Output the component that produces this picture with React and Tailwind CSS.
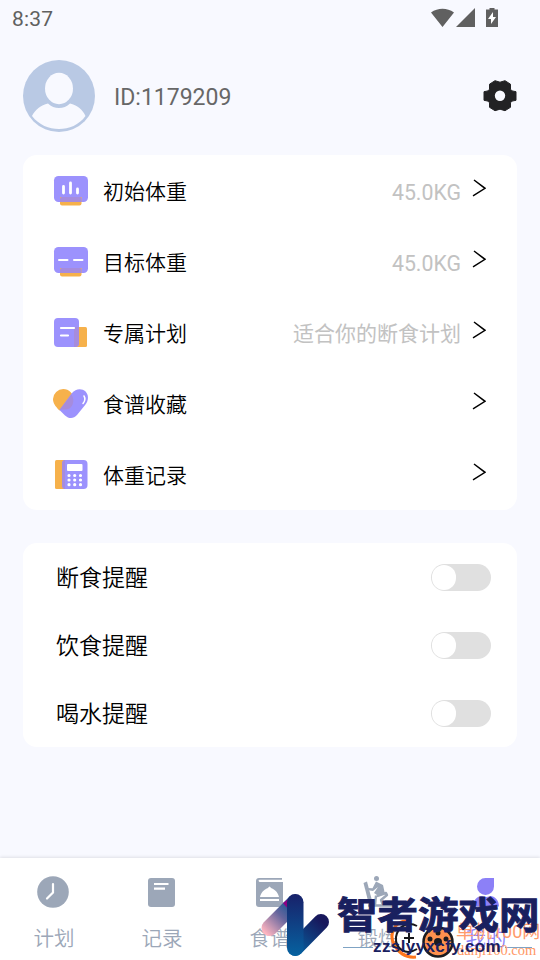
import React from "react";

const CJK = "font-['Roboto','Noto_Sans_CJK_SC',sans-serif]";

function Chevron() {
  return (
    <svg className="ml-[11px] mb-[5px] h-[18px] w-[14px] shrink-0" viewBox="0 0 14 18" fill="none" stroke="#000" strokeWidth="1.5">
      <path d="M2 1 13 9.3 1 16.8" />
    </svg>
  );
}

const icons = {
  bars: (
    <>
      <rect x="1" y="1" width="34" height="26" rx="4.5" fill="#9c92fd" />
      <path d="M7 22h21.500v6.500a2 2 0 0 1-2 2h-17.500a2 2 0 0 1-2-2z" fill="#f6b14b" />
      <path d="M7 24a2 2 0 0 1 2-2h17.500a2 2 0 0 1 2 2v3H7z" fill="#a68cdd" />
      <path d="M10.500 11.500v6.500M17.500 8v10M24.500 14v4" stroke="#fff" strokeWidth="2.800" strokeLinecap="round" />
    </>
  ),
  dashes: (
    <>
      <rect x="1" y="1" width="34" height="26" rx="4.500" fill="#9c92fd" />
      <path d="M7 22h21.500v6.500a2 2 0 0 1-2 2h-17.500a2 2 0 0 1-2-2z" fill="#f6b14b" />
      <path d="M7 24a2 2 0 0 1 2-2h17.500a2 2 0 0 1 2 2v3H7z" fill="#a68cdd" />
      <path d="M6 14h8.500M21 14h8.500" stroke="#fff" strokeWidth="2" strokeLinecap="round" />
    </>
  ),
  plan: (
    <>
      <rect x="21" y="10" width="13" height="20" rx="1.500" fill="#f6b14b" />
      <rect x="1" y="1" width="25" height="29" rx="4" fill="#9c92fd" />
      <path d="M21 12a2 2 0 0 1 2-2h3v16a4 4 0 0 1-4 4h-1z" fill="#a68cdd" />
      <path d="M8 11h13M8 18.500h7" stroke="#fff" strokeWidth="2.200" strokeLinecap="round" />
    </>
  ),
  heart: (
    <>
      <path d="M6.500 22.500C2 18 0 15 0 11A10.300 10.300 0 0 1 10.300 1C16 1 20.500 5.500 20.500 11z" fill="#f6b14b" />
      <path d="M6.500 22 19 5C22.500.5 29 0 32.500 3.500c3.500 3.500 3 9 0 13L24 27c-3.500 4-8 4-12 .5z" fill="#9c92fd" />
      <path d="M6.500 22 18.500 6.200c4 7 1 14.800-5.500 15.300-2.500 0-4.500-.2-6.500.5z" fill="#a68cdd" />
      <path d="M31 8c1.500 2.500 1 5-1 7.500" fill="none" stroke="#fff" strokeWidth="1.500" strokeLinecap="round" />
    </>
  ),
  calculator: (
    <>
      <rect x="2" y="1" width="16" height="29" rx="1.500" fill="#f6b14b" />
      <rect x="9" y="1" width="25.500" height="29" rx="4" fill="#9c92fd" />
      <path d="M9 5q0-4 3-4v29q-3 0-3-4z" fill="#a68cdd" />
      <rect x="14" y="5" width="15.500" height="7" rx="1" fill="#fff" />
      <path d="M16 16.500h.01M21.700 16.500h.01M27.500 16.500h.01M16 21h.01M21.700 21h.01M27.500 21h.01M16 25.700h.01M21.700 25.700h.01M27.500 25.700h.01" stroke="#fff" strokeWidth="3.200" strokeLinecap="round" />
    </>
  ),
};

const rows = [
  { icon: "bars", label: "初始体重", value: "45.0KG" },
  { icon: "dashes", label: "目标体重", value: "45.0KG" },
  { icon: "plan", label: "专属计划", value: "适合你的断食计划" },
  { icon: "heart", label: "食谱收藏", value: "" },
  { icon: "calculator", label: "体重记录", value: "" },
];

const reminders = ["断食提醒", "饮食提醒", "喝水提醒"];

const tabs = [
  {
    label: "计划",
    icon: (
      <>
        <circle cx="19" cy="20" r="15.800" fill="#9ca7b8" />
        <path d="M19 12v8.500l-6 6" fill="none" stroke="#fff" strokeWidth="2.200" strokeLinecap="round" />
      </>
    ),
  },
  {
    label: "记录",
    icon: (
      <>
        <rect x="6" y="6" width="27" height="29" rx="3" fill="#9ca7b8" />
        <path d="M12 12h14.500M12 16.700h11" stroke="#fff" strokeWidth="2.200" />
      </>
    ),
  },
  {
    label: "食谱",
    icon: (
      <>
        <path d="M6 9a3 3 0 0 1 3-3h23v1.800H9.500q-2 1 0 2.200H33v22a3 3 0 0 1-3 3H9a3 3 0 0 1-3-3z" fill="#9ca7b8" />
        <path d="M10 25c1-4 3-7 8-9q1.500-3 3 0c5 2 7 5 8 9zM10 27h19v2H10z" fill="#fff" />
      </>
    ),
  },
  {
    label: "锻炼",
    icon: (
      <>
        <circle cx="18.500" cy="6.500" r="2.500" fill="#9ca7b8" />
        <path d="m5.500 11 3.500-1.500 6 23h-4z" fill="#9ca7b8" />
        <path d="m18 9.500 7 3.500 2 9-8 1-3-2 4-6-5 4-6-1 .5-2 5 .3z" fill="#9ca7b8" />
        <path d="m19 24 9-3 1 2-6 5 2 5M17 33.500l1-10M10 33.500h24v-4h-7" fill="none" stroke="#9ca7b8" strokeWidth="2.400" strokeLinejoin="round" />
      </>
    ),
  },
  {
    label: "我的",
    icon: (
      <>
        <path d="M19.500 6H28v8.500A8.500 8.500 0 1 1 19.500 6z" fill="#8c80f7" />
        <path d="M7 34.500c0-6 4-10.500 9-10.500q4 2 8 0c5 0 9 4.500 9 10.500z" fill="#8c80f7" />
      </>
    ),
  },
];

function Watermark() {
  return (
    <div className="pointer-events-none absolute inset-0 overflow-hidden">
      <svg className="absolute left-0 top-0 h-full w-full" viewBox="0 0 540 110">
        <defs>
          <linearGradient id="arm" gradientUnits="userSpaceOnUse" x1="264" y1="82" x2="294" y2="52">
            <stop offset="0" stopColor="#ffb5c0" />
            <stop offset=".55" stopColor="#65659d" />
            <stop offset="1" stopColor="#065291" />
          </linearGradient>
          <linearGradient id="stem" x1="0" y1="0" x2="0" y2="1">
            <stop offset="0" stopColor="#18216a" />
            <stop offset="1" stopColor="#0662a0" />
          </linearGradient>
          <linearGradient id="tail" gradientUnits="userSpaceOnUse" x1="321" y1="71" x2="294" y2="102">
            <stop offset="0" stopColor="#18185c" />
            <stop offset="1" stopColor="#0662a0" />
          </linearGradient>
        </defs>
        <path d="M269.500 78 295 52.500" stroke="url(#arm)" strokeWidth="16" strokeLinecap="round" />
        <path d="m283 53 9-7-3 14z" fill="#8e0083" />
        <path d="M295.500 98 321 72" stroke="url(#tail)" strokeWidth="16" strokeLinecap="round" />
        <rect x="287" y="44" width="16.500" height="62" rx="8.200" fill="url(#stem)" />
        <path d="M343 97.500h30M505 97.500h27" stroke="#7fa3c4" strokeWidth="1" />
        <path d="M407 71c-13 0-18 14-13 23 5 10 12 14 22 13" fill="none" stroke="#ff761b" strokeWidth="3" />
        <path d="M417 76c-9-5-19 0-21 11-1 12 10 19 21 12M404 88h10M409 83v10" fill="none" stroke="#17171b" strokeWidth="2" />
        <circle cx="438" cy="92" r="14.500" fill="#ff914e" stroke="#1b1b20" strokeWidth="2.500" />
        <circle cx="438" cy="92" r="4" fill="#1b1b20" />
        <g fill="#1b1b20"><circle cx="430" cy="89" r="2.500" /><circle cx="446" cy="89" r="2.500" /><circle cx="438" cy="83" r="2.500" /></g>
      </svg>
      <span className="absolute left-[456px] top-[68px] whitespace-nowrap text-[18px] leading-[28px] text-[#ff9b6c]">单机100网</span>
      <span className="absolute left-[457px] top-[91px] whitespace-nowrap font-['Liberation_Serif','Noto_Sans_CJK_SC',serif] text-[14.500px] leading-[18px] text-[#ff9866]">danji100.com</span>
      <span className="absolute left-[337px] top-[41px] scale-y-[0.92] whitespace-nowrap font-['Noto_Sans_CJK_SC',sans-serif] text-[40.500px] font-bold leading-[44px] text-[#19205f] [-webkit-text-stroke:1px_#19205f]">智者游戏网</span>
      <span className="absolute left-[373px] top-[87px] whitespace-nowrap font-['Liberation_Sans','Noto_Sans_CJK_SC',sans-serif] text-[17px] font-bold leading-[20px] tracking-[0.4px] text-[#19205f]">zzslyyxcfy.com</span>
    </div>
  );
}

export default function App() {
  return (
    <div className={`flex h-[960px] w-[540px] flex-col overflow-hidden bg-[#f8f9ff] text-black ${CJK}`}>
      <div className="flex h-9 shrink-0 items-center justify-between pl-[12px] pr-[41px] pt-[2px] text-[21px] tracking-[0.2px] text-[#606060]">
        <span className="pt-[2px]">8:37</span>
        <svg className="mb-[2px] h-5 w-[68px]" viewBox="0 0 68 20" fill="#606060">
          <path d="M0 4.500C7-.5 16-.5 23 4.500L11.500 19zM44 0v19H25zM58.500 1.500V0h5v1.500h3.500V19h-12V1.500z" />
          <path d="m62 4-5 7h3v5l5-7h-3z" fill="#fff" />
        </svg>
      </div>

      <div className="mt-6 flex h-[72px] shrink-0 items-center pl-[23px] pr-[23px]">
        <svg className="h-[72px] w-[72px]" viewBox="0 0 72 72">
          <circle cx="36" cy="36" r="36" fill="#b9c9e4" />
          <ellipse cx="36" cy="28.500" rx="14" ry="15.700" fill="#f8f9ff" />
          <path d="M9 56c3-6 9-11 16-12.500 6 6 16 6 22 0C54 45 60 50 62.500 56 56 65 46 69 36 69S16 65 9 56z" fill="#f8f9ff" />
        </svg>
        <span className="ml-[19px] pt-[4px] text-[23px] text-[#676767]">ID:1179209</span>
        <svg className="ml-auto h-[34px] w-[34px]" viewBox="0 0 34 34">
          <path d="m12 1.700 5 1.500 5-1.500 5.500 3.500v5l1.500 1.700 4 .8v8.600l-4 .8-1.500 1.700v4.500L22 31.700l-5-1.500-5 1.500-5.500-3.400v-4.500L5 22.100l-4-.8v-8.600l4-.8 1.500-1.700v-5z" fill="#222224" stroke="#222224" strokeWidth="1" strokeLinejoin="round" />
          <circle cx="17" cy="16.700" r="5.200" fill="#f8f9ff" />
        </svg>
      </div>

      <div className="mx-[23px] mt-[23px] flex h-[355px] shrink-0 flex-col rounded-[14px] bg-white">
        {rows.map((row) => (
          <div key={row.label} className="flex h-[71px] items-center pl-[30px] pr-[31px]">
            <svg className="h-8 w-9 shrink-0" viewBox="0 0 36 32">{icons[row.icon]}</svg>
            <span className="ml-[14px] pt-[2px] text-[21px] font-[350] leading-[30px]">{row.label}</span>
            <span className={`ml-auto leading-[30px] text-[#c2c2c2] ${row.icon === "plan" ? "pt-[2px] text-[21px]" : "pt-[4px] text-[21.300px]"}`}>{row.value}</span>
            <Chevron />
          </div>
        ))}
      </div>

      <div className="mx-[23px] mt-[33px] flex h-[204px] shrink-0 flex-col rounded-[14px] bg-white">
        {reminders.map((label) => (
          <div key={label} className="flex h-[68px] items-center justify-between pl-[33px] pr-[26px]">
            <span className="pt-[4px] text-[23px] font-[350] leading-[32px]">{label}</span>
            <span className="flex h-[27px] w-[60px] items-center rounded-full bg-[#e0e0e0] pl-px">
              <span className="h-[25px] w-[24px] rounded-full bg-white" />
            </span>
          </div>
        ))}
      </div>

      <div className="relative mt-auto h-[102px] shrink-0 bg-white shadow-[0_-1px_3px_rgba(0,0,0,0.10)]">
        <div className="grid h-full grid-cols-5">
          {tabs.map((tab, i) => (
            <div key={tab.label} className={`flex flex-col items-center pt-[14px] ${i === 4 ? "text-[#8c80f7]" : "text-[#9ca7b8]"}`}>
              <svg className="h-10 w-10" viewBox="0 0 40 40">{tab.icon}</svg>
              <span className="mt-[12px] text-[20.500px] font-[350] leading-[30px]">{tab.label}</span>
            </div>
          ))}
        </div>
        <div className="absolute -top-2 left-0 h-[110px] w-[540px]">
          <Watermark />
        </div>
      </div>
    </div>
  );
}
